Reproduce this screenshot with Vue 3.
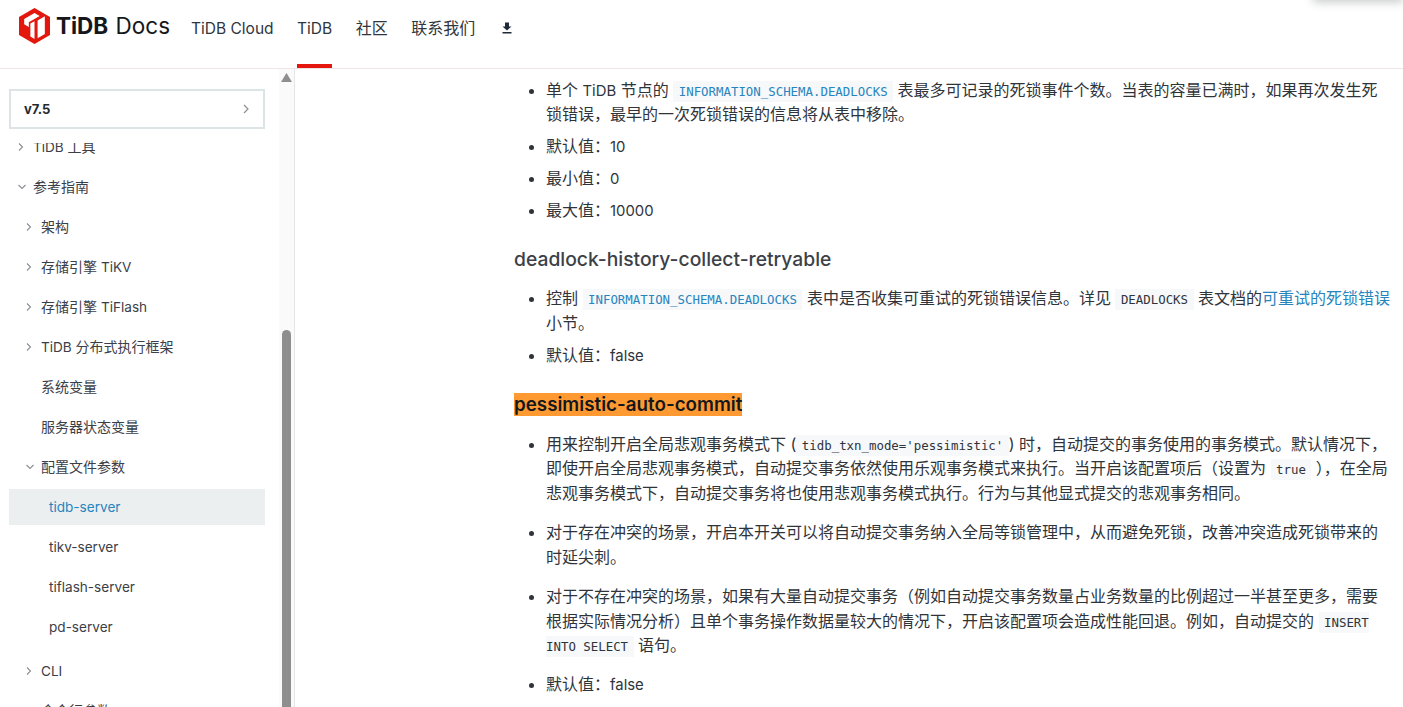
<script setup>
const runs = (text) =>
  text.split(/([A-Za-z0-9][A-Za-z0-9 -]*)/).filter(Boolean).map((t) => ({
    t,
    en: /^[A-Za-z0-9]/.test(t),
  }))

const topNav = [
  { label: 'TiDB Cloud' },
  { label: 'TiDB', active: true },
  { label: '社区' },
  { label: '联系我们' },
]
const tree = [
  { label: 'TiDB 工具', level: 0, icon: 'right', cls: 'first' },
  { label: '参考指南', level: 0, icon: 'down' },
  { label: '架构', level: 1, icon: 'right' },
  { label: '存储引擎 TiKV', level: 1, icon: 'right' },
  { label: '存储引擎 TiFlash', level: 1, icon: 'right' },
  { label: 'TiDB 分布式执行框架', level: 1, icon: 'right' },
  { label: '系统变量', level: 1 },
  { label: '服务器状态变量', level: 1 },
  { label: '配置文件参数', level: 1, icon: 'down' },
  { label: 'tidb-server', level: 2, selected: true },
  { label: 'tikv-server', level: 2 },
  { label: 'tiflash-server', level: 2 },
  { label: 'pd-server', level: 2 },
  { label: 'CLI', level: 1, icon: 'right', cls: 'gap' },
  { label: '命令行参数', level: 1 },
]
</script>

<template>
  <div class="page">
    <header class="top">
      <a class="brand">
        <svg class="hex" width="31" height="36" viewBox="0 0 30 36" preserveAspectRatio="none">
          <path fill="#e3170d" d="M15 0 30 9v18l-15 9-15-9V9z" />
          <path fill="#fff" d="M15 5 20 8 9.500 14.200V19L5 16.300V11z" />
          <path fill="#fff" d="M11 15.500l4-2.300V31l-4-2.400z" />
          <path fill="#fff" d="M18 12.500l7-4.200V26l-7 4.200z" />
        </svg>
        <span class="brand-text"><b>TiDB</b> Docs</span>
      </a>
      <nav class="nav">
        <a v-for="n in topNav" :key="n.label" class="nav-item" :class="{ on: n.active }">
          <span v-for="(r, i) in runs(n.label)" :key="i" :class="{ en: r.en }">{{ r.t }}</span>
        </a>
        <a class="nav-item dl">
          <svg width="12" height="12" viewBox="0 0 12 12">
            <path fill="#1f2937" d="M4 0.500h4v4h2.500L6 8.500 1.500 4.500H4z" />
            <rect x="1.500" y="10" width="9" height="1.500" fill="#1f2937" />
          </svg>
        </a>
      </nav>
      <div class="shade"></div>
    </header>

    <div class="body">
      <aside class="side">
        <div class="side-col">
          <div class="version">
            <b>v7.5</b>
            <svg width="8" height="10" viewBox="0 0 8 10"><path d="M2 1l4 4-4 4" fill="none" stroke="#8a8f94" stroke-width="1.200" /></svg>
          </div>
          <ul class="tree">
            <li v-for="t in tree" :key="t.label" class="row" :class="[`l${t.level}`, t.cls, { sel: t.selected }]">
              <svg v-if="t.icon === 'right'" class="car" width="8" height="10" viewBox="0 0 8 10"><path d="M2 1.500l3.500 3.500-3.500 3.500" fill="none" stroke="#8a8f94" stroke-width="1.100" /></svg>
              <svg v-if="t.icon === 'down'" class="car" width="10" height="8" viewBox="0 0 10 8"><path d="M1.500 2l3.500 3.500 3.500-3.500" fill="none" stroke="#8a8f94" stroke-width="1.100" /></svg>
              <span class="lbl"><span v-for="(r, i) in runs(t.label)" :key="i" :class="{ en: r.en }">{{ r.t }}</span></span>
            </li>
          </ul>
        </div>
        <div class="bar">
          <svg class="arrow" width="11" height="9" viewBox="0 0 11 9"><path d="M5.500 0 11 9H0z" fill="#8e8e8e" /></svg>
          <div class="thumb"></div>
        </div>
      </aside>

      <main class="doc">
        <ul class="tight">
          <li>单个 <span class="en">TiDB</span> 节点的 <code class="blue">INFORMATION_SCHEMA.DEADLOCKS</code> 表最多可记录的死锁事件个数。当表的容量已满时，如果再次发生死锁错误，最早的一次死锁错误的信息将从表中移除。</li>
          <li>默认值：<span class="en">10</span></li>
          <li>最小值：<span class="en">0</span></li>
          <li>最大值：<span class="en">10000</span></li>
        </ul>
        <h3 class="h-a">deadlock-history-collect-retryable</h3>
        <ul class="tight">
          <li>控制 <code class="blue">INFORMATION_SCHEMA.DEADLOCKS</code> 表中是否收集可重试的死锁错误信息。详见 <code>DEADLOCKS</code> 表文档的<a class="link">可重试的死锁错误</a>小节。</li>
          <li>默认值：<span class="en">false</span></li>
        </ul>
        <h3 class="h-b"><mark>pessimistic-auto-commit</mark></h3>
        <ul class="loose">
          <li>用来控制开启全局悲观事务模式下 (<code>tidb_txn_mode='pessimistic'</code>) 时，自动提交的事务使用的事务模式。默认情况下，即使开启全局悲观事务模式，自动提交事务依然使用乐观事务模式来执行。当开启该配置项后（设置为 <code>true</code> ），在全局悲观事务模式下，自动提交事务将也使用悲观事务模式执行。行为与其他显式提交的悲观事务相同。</li>
          <li>对于存在冲突的场景，开启本开关可以将自动提交事务纳入全局等锁管理中，从而避免死锁，改善冲突造成死锁带来的时延尖刺。</li>
          <li>对于不存在冲突的场景，如果有大量自动提交事务（例如自动提交事务数量占业务数量的比例超过一半甚至更多，需要根据实际情况分析）且单个事务操作数据量较大的情况下，开启该配置项会造成性能回退。例如，自动提交的 <code>INSERT INTO SELECT</code> 语句。</li>
          <li>默认值：<span class="en">false</span></li>
        </ul>
      </main>
    </div>
  </div>
</template>

<style>
html, body { margin: 0; height: 100%; overflow: hidden; background: #fff; }
</style>

<style scoped>
.page {
  height: 707px;
  overflow: hidden;
  display: flex;
  flex-direction: column;
  font-family: Inter, "Noto Sans CJK SC", sans-serif;
  color: #24292f;
}
.en { font-size: .97em; line-height: 1; }
.doc .en { font-size: .93em; }
.top {
  height: 68px;
  flex: none;
  box-sizing: content-box;
  border-bottom: 1px solid #f0e4e6;
  display: flex;
  position: relative;
}
.brand {
  display: flex;
  align-items: flex-start;
  padding: 8px 0 0 19px;
  width: 175px;
  box-sizing: border-box;
  flex: none;
}
.brand-text {
  font-size: 22.500px;
  line-height: 36px;
  margin-left: 6px;
  color: #14181c;
  white-space: pre;
  word-spacing: 1px;
}
.brand-text b { font-weight: 700; }
.nav { display: flex; gap: 23.500px; margin-left: 16px; }
.nav-item {
  font-size: 16px;
  line-height: 56px;
  height: 68px;
  box-sizing: border-box;
  color: #2f3640;
  white-space: nowrap;
}
.nav-item.on { border-bottom: 4px solid #e3170d; }
.dl { display: flex; align-items: flex-start; padding-top: 22px; margin-left: 2px; }
.shade {
  position: absolute;
  right: 0;
  top: -10px;
  width: 90px;
  height: 10px;
  box-shadow: 0 2px 10px rgba(60, 70, 70, .3);
}
.body { flex: 1; display: flex; min-height: 0; }
.side {
  width: 295px;
  flex: none;
  box-sizing: border-box;
  border-right: 1px solid #e6e6e6;
  display: flex;
  position: relative;
}
.side-col { width: 279px; flex: none; display: flex; flex-direction: column; min-height: 0; }
.version {
  margin: 20px 0 0 9px;
  width: 256px;
  height: 40px;
  box-sizing: border-box;
  border: 2px solid #dde4e6;
  display: flex;
  align-items: center;
  justify-content: space-between;
  padding: 0 13px;
  font-size: 13px;
  flex: none;
  color: #24292f;
}
.tree {
  list-style: none;
  margin: 14px 0 0;
  padding: 0;
  overflow: hidden;
  flex: 1;
  min-height: 0;
}
.row {
  position: relative;
  height: 36px;
  line-height: 36px;
  margin: 0 14px 4px 9px;
  font-size: 14px;
  color: #3b4048;
  white-space: nowrap;
}
.row.first { margin-top: -14px; }
.row.gap { margin-top: 8px; }
.l0 .lbl { margin-left: 24px; }
.l1 .lbl { margin-left: 32px; }
.l2 .lbl { margin-left: 40px; }
.l0 .car { position: absolute; left: 8px; top: 13px; }
.l1 .car { position: absolute; left: 16px; top: 13px; }
.l0 svg[width="10"], .l1 svg[width="10"] { top: 14px; }
.sel { background: #ebeff0; color: #2784bd; }
.bar { flex: 1; background: #fafafa; position: relative; }
.arrow { position: absolute; left: 2px; top: 4px; }
.thumb {
  position: absolute;
  left: 3px;
  top: 261px;
  width: 9px;
  height: 400px;
  border-radius: 5px 5px 0 0;
  background: #8e8e8e;
}
.doc {
  flex: 1;
  min-width: 0;
  padding: 8.600px 11px 0 219px;
  font-size: 16px;
  line-height: 24.800px;
  color: #2f343b;
  overflow: hidden;
}
ul.tight, ul.loose { margin: 0; padding: 0 0 0 32px; }
.tight li { margin-bottom: 7.200px; }
.loose li { margin-bottom: 14.200px; }
li::marker { color: #2f343b; }
code {
  font-family: "DejaVu Sans Mono", monospace;
  font-size: 12.400px;
  line-height: 1;
  background: #f6f8fa;
  padding: 3px 5.500px;
  color: #2f343b;
}
code.blue { color: #2784bd; }
.link { color: #2784bd; }
h3 {
  margin: 0;
  font-size: 19.300px;
  font-weight: 500;
  line-height: 24px;
}
.h-a { color: #3c4148; margin: 23.600px 0 15px; }
.h-b { margin: 25.600px 0 14.600px; font-size: 18.800px; font-weight: 600; }
mark { background: #ff9a33; color: #14181c; }
</style>
